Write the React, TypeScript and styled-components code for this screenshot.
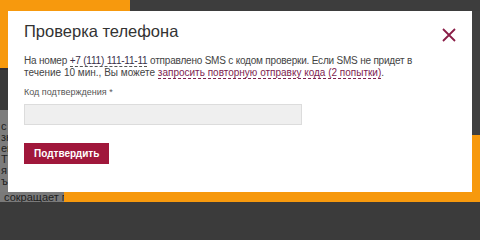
import React from 'react';
import styled, { createGlobalStyle } from 'styled-components';

const GlobalStyle = createGlobalStyle`
  html, body {
    margin: 0;
    padding: 0;
    height: 202px;
    overflow: hidden;
    background: #3b3b3b;
  }
  body {
    font-family: "Liberation Sans", Arial, sans-serif;
  }
`;

const ORANGE = '#f7990d';

const Page = styled.div`
  width: 480px;
  height: 202px;
  overflow: hidden;
  display: grid;
  grid-template-columns: 8px 464px 8px;
  grid-template-rows: 11px 181px 10px;
`;

const Band = styled.div`
  grid-column: 1 / -1;
  display: flex;
  overflow: hidden;
`;

const Side = styled.div`
  display: flex;
  flex-direction: column;
  overflow: hidden;
`;

const Patch = styled.div<{ $bg: string; $size?: number }>`
  background: ${(p) => p.$bg};
  flex: ${(p) => (p.$size ? `0 0 ${p.$size}px` : '1 1 auto')};
  overflow: hidden;
  white-space: nowrap;
  font-size: 11px;
  line-height: 11px;
  color: #1e1e1e;
`;

const Scrap = styled.div`
  padding-left: 1px;
`;

const Modal = styled.div`
  background: #fff;
  padding: 9px 16px 0 16px;
  box-shadow: 1px 1px 1px rgba(0, 0, 0, 0.45);
`;

const Header = styled.div`
  display: flex;
  justify-content: space-between;
  align-items: flex-start;
`;

const Title = styled.h2`
  margin: 0;
  font-size: 16.5px;
  line-height: 22px;
  font-weight: normal;
  color: #333;
`;

const Close = styled.button`
  border: 0;
  background: none;
  padding: 0;
  margin: 8px 0 0 0;
  width: 14px;
  height: 14px;
  display: flex;
  cursor: pointer;
`;

const Text = styled.p`
  margin: 13px 0 0 0;
  font-size: 10px;
  line-height: 12px;
  color: #444;
  white-space: nowrap;
`;

const Line = styled.span<{ $tight?: boolean }>`
  display: block;
  letter-spacing: ${(p) => (p.$tight ? '-0.2px' : '0')};
`;

const Link = styled.a<{ $accent?: boolean }>`
  color: ${(p) => (p.$accent ? '#7e2350' : '#3a2f4a')};
  text-decoration: none;
  border-bottom: 1px dashed ${(p) => (p.$accent ? '#7e2350' : '#555')};
`;

const Label = styled.label`
  display: block;
  margin-top: 8px;
  font-size: 9px;
  line-height: 11px;
  color: #555;
`;

const Input = styled.input`
  display: block;
  box-sizing: border-box;
  margin-top: 6px;
  width: 278px;
  height: 21px;
  background: #efefef;
  border: 1px solid #dcdcdc;
  outline: none;
`;

const Button = styled.button`
  display: block;
  margin-top: 18px;
  height: 21px;
  padding: 0 10px;
  border: 0;
  background: #a0173b;
  color: #fff;
  font-family: "Liberation Sans", Arial, sans-serif;
  font-weight: bold;
  font-size: 10px;
`;

export default function App() {
  return (
    <>
      <GlobalStyle />
      <Page>
        <Band>
          <Patch $bg={ORANGE} $size={130} />
          <Patch $bg="#3d3d3d" />
        </Band>
        <Side>
          <Patch $bg={ORANGE} $size={57} />
          <Patch $bg="#2f2d33" $size={2} />
          <Patch $bg="#3a3a3a" $size={40} />
          <Patch $bg="#7c7c7c">
            <Scrap>&nbsp;</Scrap>
            <Scrap>c</Scrap>
            <Scrap>зн</Scrap>
            <Scrap>ен</Scrap>
            <Scrap>Т'</Scrap>
            <Scrap>я</Scrap>
            <Scrap>ъ</Scrap>
          </Patch>
        </Side>
        <Modal>
          <Header>
            <Title>Проверка телефона</Title>
            <Close aria-label="Закрыть">
              <svg width="14" height="14" viewBox="0 0 14 14">
                <path d="M1 1 L13 13 M13 1 L1 13" stroke="#8a1d47" strokeWidth="1.8" fill="none" />
              </svg>
            </Close>
          </Header>
          <Text>
            <Line $tight>
              На номер <Link>+7 (111) 111-11-11</Link> отправлено SMS с кодом проверки. Если SMS не придет в
            </Line>
            <Line>
              течение 10 мин., Вы можете <Link $accent>запросить повторную отправку кода (2 попытки)</Link>.
            </Line>
          </Text>
          <Label>Код подтверждения *</Label>
          <Input />
          <Button>Подтвердить</Button>
        </Modal>
        <Side>
          <Patch $bg="#404040" $size={124} />
          <Patch $bg={ORANGE} />
        </Side>
        <Band>
          <Patch $bg="#7a7a7a" $size={64}>
            <Scrap>&nbsp;сокращает п</Scrap>
          </Patch>
          <Patch $bg={ORANGE} />
        </Band>
      </Page>
    </>
  );
}
